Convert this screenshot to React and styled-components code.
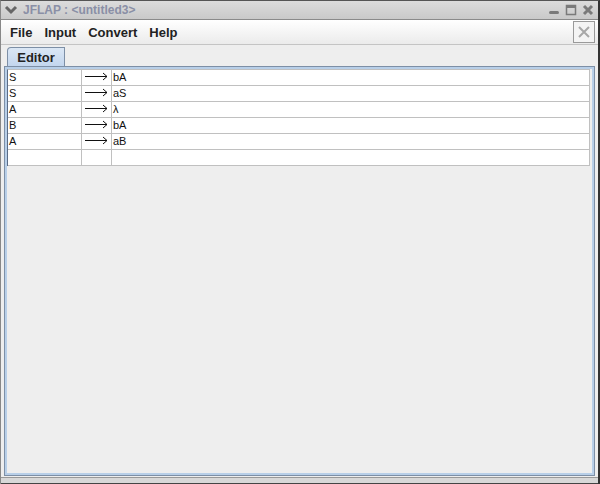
import React from 'react';
import styled, { createGlobalStyle } from 'styled-components';

const GlobalStyle = createGlobalStyle`
  html, body {
    margin: 0;
    padding: 0;
    background: #eeeeee;
  }
  body {
    font-family: "Liberation Sans", "DejaVu Sans", sans-serif;
  }
`;

const Frame = styled.div`
  width: 600px;
  height: 484px;
  box-sizing: border-box;
  display: flex;
  flex-direction: column;
  background: #eeeeee;
  border-top: 1px solid #555;
  border-right: 2px solid #333;
  border-left: 1px solid #888;
  overflow: hidden;
`;

const TitleBar = styled.div`
  height: 18px;
  display: flex;
  align-items: center;
  background: linear-gradient(#dcdcdc, #c9c9c9);
  border-bottom: 1px solid #8a8a8a;
  padding: 0 4px 0 3px;
`;

const TitleText = styled.span`
  font-size: 12px;
  font-weight: bold;
  color: #8a8fa6;
  margin-left: 5px;
  flex: 1;
`;

const TitleIcons = styled.div`
  display: flex;
  gap: 5px;
  align-items: center;
`;

const MenuBar = styled.div`
  height: 24px;
  display: flex;
  align-items: center;
  background: linear-gradient(#ffffff, #ebebeb);
  border-bottom: 1px solid #c4c4c4;
  padding-left: 9px;
`;

const MenuItem = styled.span`
  font-size: 13px;
  font-weight: bold;
  color: #222;
  margin-right: 12px;
`;

const CloseBox = styled.div`
  margin-left: auto;
  margin-right: 3px;
  width: 20px;
  height: 20px;
  border: 1px solid #9a9a9a;
  background: #f4f4f4;
  display: flex;
  align-items: center;
  justify-content: center;
`;

const Body = styled.div`
  flex: 1;
  display: flex;
  flex-direction: column;
  padding: 2px 3px 0 3px;
`;

const TabStrip = styled.div`
  display: flex;
  padding-left: 3px;
  height: 19px;
`;

const Tab = styled.div`
  width: 58px;
  height: 19px;
  box-sizing: border-box;
  background: linear-gradient(#dbe7f5, #c3d6ee);
  border: 1px solid #7d8fa6;
  border-bottom: none;
  border-top-left-radius: 4px;
  font-size: 13px;
  font-weight: bold;
  color: #222;
  display: flex;
  align-items: center;
  justify-content: center;
  padding-top: 1px;
`;

const TabPanel = styled.div`
  height: 406px;
  border: 1px solid #7d8fa6;
  box-shadow: inset 0 0 0 2px #b8cfe8;
  padding: 2px 4px 0 2px;
  display: flex;
  flex-direction: column;
`;

const Grid = styled.div`
  display: grid;
  grid-template-columns: 74px 30px 1fr;
  background: #ffffff;
  border-left: 1px solid #5a6c86;
  border-top: 1px solid #c0c0c0;
`;

const Cell = styled.div`
  height: 15px;
  border-right: 1px solid #c0c0c0;
  border-bottom: 1px solid #c0c0c0;
  font-size: 11px;
  color: #111;
  padding-left: ${p => (p.$arrow ? '3px' : '1px')};
  line-height: 15px;
  white-space: nowrap;
  overflow: hidden;
`;

const BottomEdge = styled.div`
  height: 5px;
  background: #d8d8d8;
  border-top: 1px solid #999;
  border-bottom: 1px solid #444;
`;

const rows = [
  ['S', 'bA'],
  ['S', 'aS'],
  ['A', 'λ'],
  ['B', 'bA'],
  ['A', 'aB'],
  ['', ''],
];

const Arrow = () => (
  <svg width="24" height="9" viewBox="0 0 24 9">
    <path d="M0 4.5 H22 M18 1 L22 4.5 L18 8" stroke="#111" strokeWidth="1" fill="none" />
  </svg>
);

const App = () => {
  return (
    <>
      <GlobalStyle />
      <Frame>
        <TitleBar>
          <svg width="14" height="10" viewBox="0 0 14 10">
            <path d="M2 2 L7 7 L12 2" stroke="#666" strokeWidth="3" fill="none" />
          </svg>
          <TitleText>JFLAP : &lt;untitled3&gt;</TitleText>
          <TitleIcons>
            <svg width="12" height="12" viewBox="0 0 12 12">
              <rect x="1" y="7" width="10" height="3" rx="1.5" fill="#7a7a7a" />
            </svg>
            <svg width="12" height="12" viewBox="0 0 12 12">
              <rect x="1.5" y="1.5" width="9" height="9" stroke="#7a7a7a" strokeWidth="1.5" fill="none" />
              <rect x="1" y="1" width="10" height="3" fill="#7a7a7a" />
            </svg>
            <svg width="12" height="12" viewBox="0 0 12 12">
              <path d="M2 2 L10 10 M10 2 L2 10" stroke="#7a7a7a" strokeWidth="3" />
            </svg>
          </TitleIcons>
        </TitleBar>
        <MenuBar>
          <MenuItem>File</MenuItem>
          <MenuItem>Input</MenuItem>
          <MenuItem>Convert</MenuItem>
          <MenuItem>Help</MenuItem>
          <CloseBox>
            <svg width="14" height="14" viewBox="0 0 14 14">
              <path d="M2 2 L12 12 M12 2 L2 12" stroke="#a8a8a8" strokeWidth="2" />
            </svg>
          </CloseBox>
        </MenuBar>
        <Body>
          <TabStrip>
            <Tab>Editor</Tab>
          </TabStrip>
          <TabPanel>
            <Grid>
              {rows.map(([lhs, rhs], i) => (
                <React.Fragment key={i}>
                  <Cell>{lhs}</Cell>
                  <Cell $arrow>{lhs ? <Arrow /> : null}</Cell>
                  <Cell>{rhs}</Cell>
                </React.Fragment>
              ))}
            </Grid>
          </TabPanel>
        </Body>
        <BottomEdge />
      </Frame>
    </>
  );
};

export default App;
